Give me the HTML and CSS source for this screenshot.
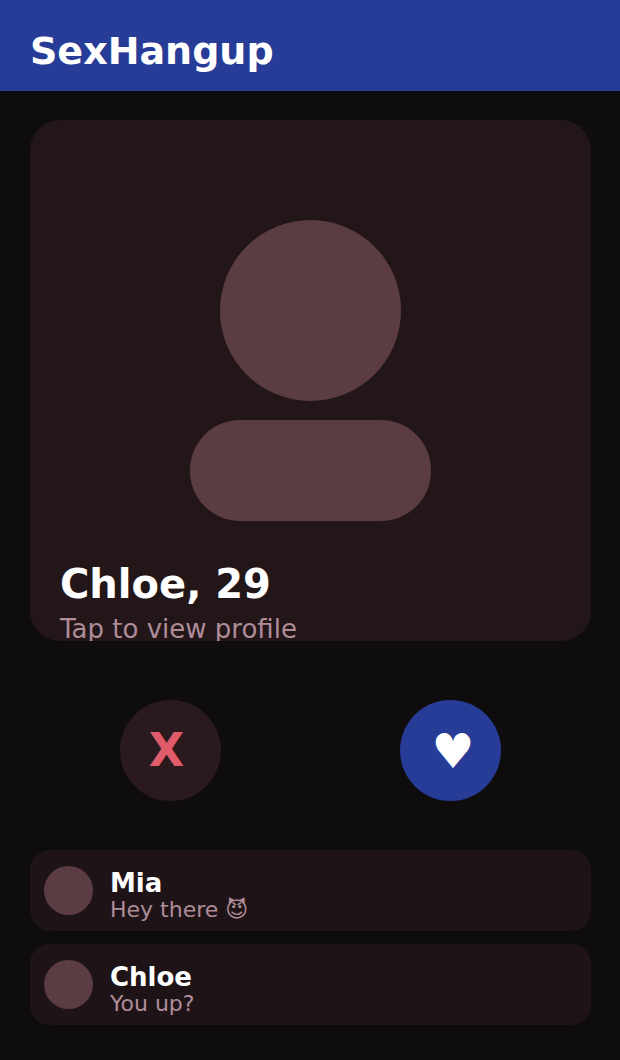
FILE: index.html
```html
<!DOCTYPE html>
<html lang="en">
<head>
<meta charset="utf-8">
<title>SexHangup</title>
<link rel="stylesheet" href="styles.css">
</head>
<body>
<header class="topbar"><h1 class="brand">SexHangup</h1></header>
<main class="content">
  <section class="card">
    <div class="figure">
      <div class="head"></div>
      <div class="torso"></div>
    </div>
    <div class="info">
      <div class="name">Chloe, 29</div>
      <div class="hint">Tap to view profile</div>
    </div>
  </section>
  <div class="actions">
    <button class="action pass">X</button>
    <button class="action like">♥</button>
  </div>
  <ul class="chats">
    <li class="chat">
      <div class="avatar"></div>
      <div class="chat-text"><div class="chat-name">Mia</div><div class="chat-msg">Hey there 😈</div></div>
    </li>
    <li class="chat">
      <div class="avatar"></div>
      <div class="chat-text"><div class="chat-name">Chloe</div><div class="chat-msg">You up?</div></div>
    </li>
  </ul>
</main>
</body>
</html>
```
FILE: styles.css
```css
* { box-sizing: border-box; }
html, body { margin: 0; height: 100%; }
body {
  background: #0f0c0e;
  color: #fff;
  font-family: "DejaVu Sans", sans-serif;
  overflow: hidden;
}
.topbar {
  height: 91px;
  background: #273c97;
  display: flex;
  align-items: center;
  padding: 10px 0 0 30px;
}
.brand { margin: 0; font-size: 38px; font-weight: 700; line-height: 1; }
.content { padding: 29px 29px 0 30px; }
.card {
  height: 521px;
  background: #221619;
  border-radius: 30px;
  overflow: hidden;
  display: flex;
  flex-direction: column;
  align-items: center;
  padding-top: 100px;
}
.figure { display: flex; flex-direction: column; align-items: center; gap: 19px; }
.head { width: 181px; height: 181px; border-radius: 50%; background: #5b3c43; }
.torso { width: 241px; height: 101px; border-radius: 50px; background: #5b3c43; }
.info { align-self: stretch; padding: 40px 30px 0; }
.name { font-size: 40px; font-weight: 700; line-height: 47px; }
.hint { font-size: 26px; line-height: 42px; color: #b08c99; }
.actions { display: flex; justify-content: space-between; padding: 59px 90px 0; }
.action {
  width: 101px; height: 101px; border: 0; border-radius: 50%;
  display: flex; align-items: center; justify-content: center;
  font-family: inherit; font-weight: 700; font-size: 48px;
}
.pass { background: #2a1a1e; color: #e05c6a; padding: 0 8px 2px 0; font-size: 46px; }
.like { background: #273c97; color: #fff; padding: 0 0 0 5px; }
.chats { list-style: none; margin: 0; padding: 49px 0 0; display: flex; flex-direction: column; gap: 13px; }
.chat {
  height: 81px; background: #1e1417; border-radius: 20px;
  display: flex; align-items: center; gap: 17px; padding-left: 14px;
}
.avatar { width: 49px; height: 49px; border-radius: 50%; background: #5b3c43; }
.chat-text { padding-top: 11px; }
.chat-name { font-size: 26px; font-weight: 700; line-height: 28px; }
.chat-msg { font-size: 22px; line-height: 26px; color: #b08c99; }
```
